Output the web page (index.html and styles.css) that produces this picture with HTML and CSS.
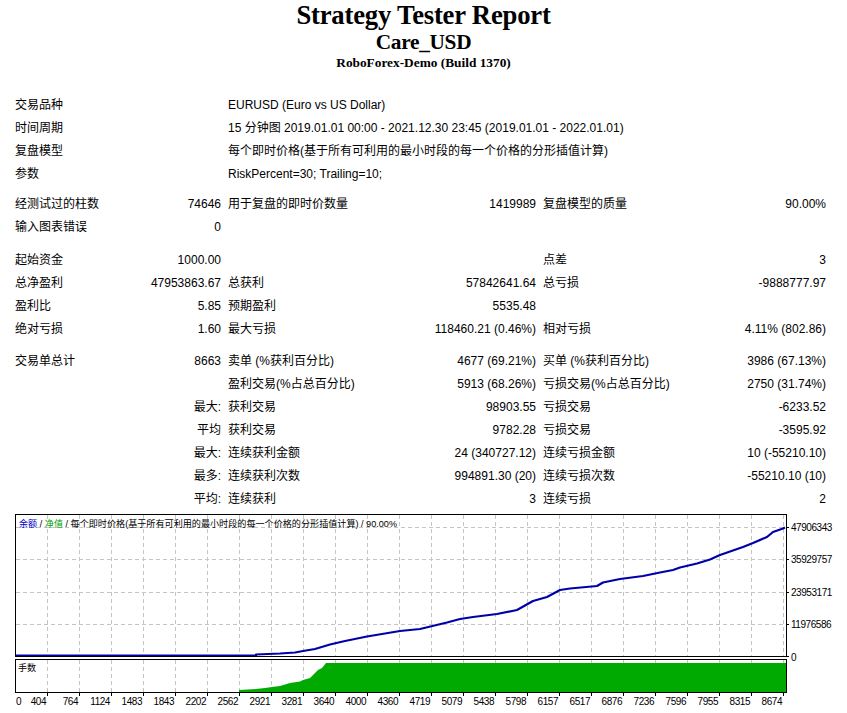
FILE: index.html
```html
<!DOCTYPE html>
<html lang="zh">
<head>
<meta charset="utf-8">
<title>Strategy Tester Report</title>
<link rel="stylesheet" href="styles.css">
</head>
<body>
<div class="report">
  <header class="head">
    <div class="title">Strategy Tester Report</div>
    <div class="subtitle">Care_USD</div>
    <div class="server">RoboForex-Demo (Build 1370)</div>
  </header>

  <div class="sec s1">
    <div>交易品种</div><div></div><div class="wide">EURUSD (Euro vs US Dollar)</div>
    <div>时间周期</div><div></div><div class="wide">15 分钟图 2019.01.01 00:00 - 2021.12.30 23:45 (2019.01.01 - 2022.01.01)</div>
    <div>复盘模型</div><div></div><div class="wide">每个即时价格(基于所有可利用的最小时段的每一个价格的分形插值计算)</div>
    <div>参数</div><div></div><div class="wide">RiskPercent=30; Trailing=10;</div>
  </div>

  <div class="sec s2">
    <div>经测试过的柱数</div><div class="v">74646</div><div>用于复盘的即时价数量</div><div class="v">1419989</div><div>复盘模型的质量</div><div class="v">90.00%</div>
    <div>输入图表错误</div><div class="v">0</div><div></div><div></div><div></div><div></div>
  </div>

  <div class="sec s3">
    <div>起始资金</div><div class="v">1000.00</div><div></div><div></div><div>点差</div><div class="v">3</div>
    <div>总净盈利</div><div class="v">47953863.67</div><div>总获利</div><div class="v">57842641.64</div><div>总亏损</div><div class="v">-9888777.97</div>
    <div>盈利比</div><div class="v">5.85</div><div>预期盈利</div><div class="v">5535.48</div><div></div><div></div>
    <div>绝对亏损</div><div class="v">1.60</div><div>最大亏损</div><div class="v">118460.21 (0.46%)</div><div>相对亏损</div><div class="v">4.11% (802.86)</div>
  </div>

  <div class="sec s4">
    <div>交易单总计</div><div class="v">8663</div><div>卖单 (%获利百分比)</div><div class="v">4677 (69.21%)</div><div>买单 (%获利百分比)</div><div class="v">3986 (67.13%)</div>
    <div></div><div></div><div>盈利交易(%占总百分比)</div><div class="v">5913 (68.26%)</div><div>亏损交易(%占总百分比)</div><div class="v">2750 (31.74%)</div>
    <div></div><div class="v">最大:</div><div>获利交易</div><div class="v">98903.55</div><div>亏损交易</div><div class="v">-6233.52</div>
    <div></div><div class="v">平均</div><div>获利交易</div><div class="v">9782.28</div><div>亏损交易</div><div class="v">-3595.92</div>
    <div></div><div class="v">最大:</div><div>连续获利金额</div><div class="v">24 (340727.12)</div><div>连续亏损金额</div><div class="v">10 (-55210.10)</div>
    <div></div><div class="v">最多:</div><div>连续获利次数</div><div class="v">994891.30 (20)</div><div>连续亏损次数</div><div class="v">-55210.10 (10)</div>
    <div></div><div class="v">平均:</div><div>连续获利</div><div class="v">3</div><div>连续亏损</div><div class="v">2</div>
  </div>

  <div class="chart">
    <svg class="chart-svg" width="847" height="203" viewBox="0 510 847 203" xmlns="http://www.w3.org/2000/svg">
      <rect x="15.5" y="514.5" width="771" height="142" fill="#fff" stroke="none"/>
      <rect x="15.5" y="659.5" width="771" height="33" fill="#fff" stroke="none"/>
      <path class="grid" d="M47.5 515V656M79.5 515V656M111.5 515V656M143.5 515V656M175.5 515V656M207.5 515V656M239.5 515V656M271.5 515V656M303.5 515V656M335.5 515V656M367.5 515V656M399.5 515V656M431.5 515V656M463.5 515V656M495.5 515V656M527.5 515V656M559.5 515V656M591.5 515V656M623.5 515V656M655.5 515V656M687.5 515V656M719.5 515V656M751.5 515V656M783.5 515V656M16 527.5H786M16 559.5H786M16 592.5H786M16 624.5H786"/>
      <path class="grid" d="M47.5 660V692M79.5 660V692M111.5 660V692M143.5 660V692M175.5 660V692M207.5 660V692M239.5 660V692M271.5 660V692M303.5 660V692M335.5 660V692M367.5 660V692M399.5 660V692M431.5 660V692M463.5 660V692M495.5 660V692M527.5 660V692M559.5 660V692M591.5 660V692M623.5 660V692M655.5 660V692M687.5 660V692M719.5 660V692M751.5 660V692M783.5 660V692"/>
      <polygon class="lots" points="239,692 239,690 256,689 265,688 272,687 280,686 285,684.5 290,683 300,681.5 303,680 310,678 315,673 318,670 322,668 326,663 786,663 786,692"/>
      <polyline class="balance" points="16,655.5 256,655.5 256,654.5 280,653.5 295,652.5 303,651 315,649 330,644.5 345,641 367,636.5 385,633.5 400,631 420,629 447,622.5 460,619 473,617 497,614 517,610 533,601 547,597 560,590 570,588.5 597,586 603,582.5 620,579 643,576 660,572.5 673,570 680,567.5 697,563.5 710,559.5 720,555 743,547 753,543 767,537 773,532 783,528.5 785,527.5"/>
      <rect class="frame" x="15.5" y="514.5" width="771" height="142"/>
      <rect class="frame" x="15.5" y="659.5" width="771" height="33"/>
      <path class="tick" d="M786 527.5h3M786 559.5h3M786 592.5h3M786 624.5h3M786 656.5h3M47.5 693v3M79.5 693v3M111.5 693v3M143.5 693v3M175.5 693v3M207.5 693v3M239.5 693v3M271.5 693v3M303.5 693v3M335.5 693v3M367.5 693v3M399.5 693v3M431.5 693v3M463.5 693v3M495.5 693v3M527.5 693v3M559.5 693v3M591.5 693v3M623.5 693v3M655.5 693v3M687.5 693v3M719.5 693v3M751.5 693v3M783.5 693v3"/>
      <text class="ctitle" x="19" y="526.5"><tspan class="c-bal">余额</tspan> / <tspan class="c-eq">净值</tspan> / 每个即时价格(基于所有可利用的最小时段的每一个价格的分形插值计算) / 90.00%</text>
      <text class="ctitle" x="18" y="670.5">手数</text>
      <text class="ax" x="791" y="531">47906343</text>
      <text class="ax" x="791" y="563">35929757</text>
      <text class="ax" x="791" y="596">23953171</text>
      <text class="ax" x="791" y="628">11976586</text>
      <text class="ax" x="791" y="661">0</text>
      <text class="ax" x="16" y="704.5">0</text>
      <g class="xl">
        <text class="ax" x="46" y="704.5">404</text>
        <text class="ax" x="78" y="704.5">764</text>
        <text class="ax" x="110" y="704.5">1124</text>
        <text class="ax" x="142" y="704.5">1483</text>
        <text class="ax" x="174" y="704.5">1843</text>
        <text class="ax" x="206" y="704.5">2202</text>
        <text class="ax" x="238" y="704.5">2562</text>
        <text class="ax" x="270" y="704.5">2921</text>
        <text class="ax" x="302" y="704.5">3281</text>
        <text class="ax" x="334" y="704.5">3640</text>
        <text class="ax" x="366" y="704.5">4000</text>
        <text class="ax" x="398" y="704.5">4360</text>
        <text class="ax" x="430" y="704.5">4719</text>
        <text class="ax" x="462" y="704.5">5079</text>
        <text class="ax" x="494" y="704.5">5438</text>
        <text class="ax" x="526" y="704.5">5798</text>
        <text class="ax" x="558" y="704.5">6157</text>
        <text class="ax" x="590" y="704.5">6517</text>
        <text class="ax" x="622" y="704.5">6876</text>
        <text class="ax" x="654" y="704.5">7236</text>
        <text class="ax" x="686" y="704.5">7596</text>
        <text class="ax" x="718" y="704.5">7955</text>
        <text class="ax" x="750" y="704.5">8315</text>
        <text class="ax" x="782" y="704.5">8674</text>
      </g>
    </svg>
  </div>
</div>
</body>
</html>
```

FILE: styles.css
```css
html, body {
  margin: 0;
  padding: 0;
  background: #ffffff;
}

.report {
  width: 847px;
  font-family: "Liberation Sans", "Noto Sans CJK SC", sans-serif;
  font-size: 12px;
  color: #000;
}

.head {
  text-align: center;
  font-family: "Liberation Serif", "Noto Sans CJK SC", serif;
  font-weight: bold;
  margin-bottom: 22px;
}

.title {
  font-size: 26.67px;
  line-height: 30px;
  letter-spacing: -0.2px;
}

.subtitle {
  font-size: 21.33px;
  line-height: 24px;
  letter-spacing: -0.3px;
}

.server {
  font-size: 13.33px;
  line-height: 18px;
}

.sec {
  display: grid;
  grid-template-columns: 105px 94px 192px 109px 190px 86px;
  column-gap: 7px;
  grid-auto-rows: 23px;
  line-height: 23px;
  padding-left: 15px;
  white-space: nowrap;
}

.s1 { margin-top: 1px; }
.s2 { margin-top: 7px; }
.s3 { margin-top: 10px; }
.s4 { margin-top: 9px; }

.v {
  text-align: right;
}

.wide {
  grid-column: 3 / -1;
}

.chart {
  margin-top: -1px;
}

.chart-svg {
  display: block;
}

.grid {
  fill: none;
  stroke: #c4c4c4;
  stroke-width: 1;
  stroke-dasharray: 4 3;
}

.frame {
  fill: none;
  stroke: #000;
  stroke-width: 1;
}

.tick {
  fill: none;
  stroke: #000;
  stroke-width: 1;
}

.lots {
  fill: #00aa00;
}

.balance {
  fill: none;
  stroke: #0000a8;
  stroke-width: 2.2;
  stroke-linejoin: round;
}

.ctitle {
  font-family: "Liberation Sans", "Noto Sans CJK SC", sans-serif;
  font-size: 9.1px;
  fill: #000;
}

.c-bal { fill: #0000c8; }
.c-eq { fill: #00a000; }

.ax {
  font-family: "Liberation Sans", sans-serif;
  font-size: 10px;
  letter-spacing: -0.45px;
  fill: #000;
}

.xl .ax {
  text-anchor: end;
}
```
